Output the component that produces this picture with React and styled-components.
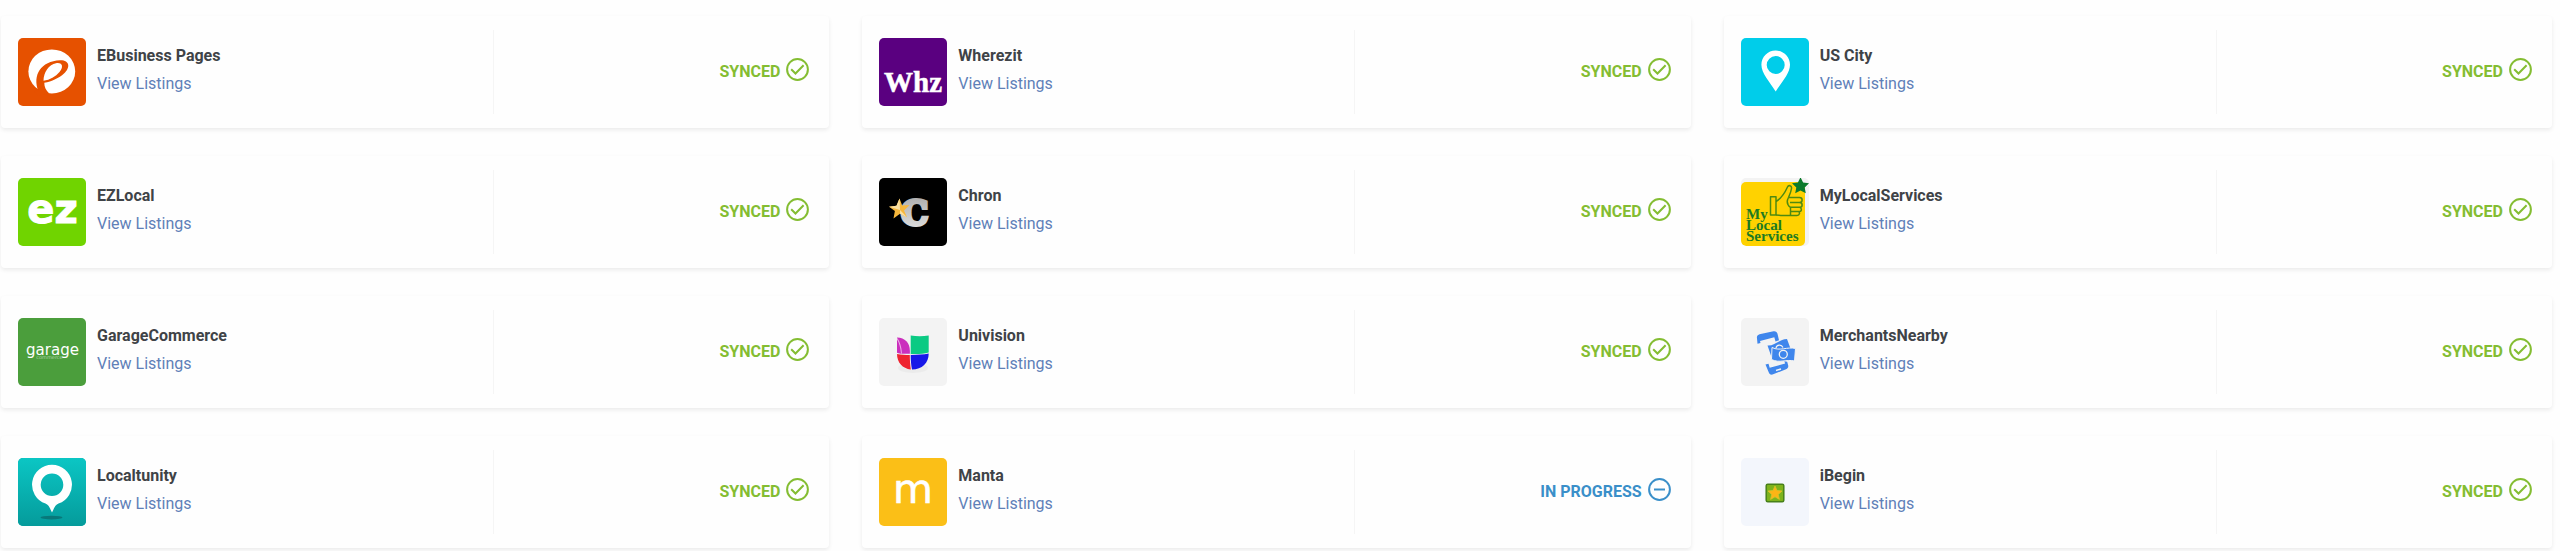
import React from 'react';
import styled, { createGlobalStyle } from 'styled-components';

const theme = {
	font: `Roboto, "Liberation Sans", sans-serif`,
	dark: "#3f4347",
	link: "#5f80b8",
	synced: "#84bd32",
	progress: "#3a8fc9",
}

const listings = [
	{ name: "EBusiness Pages", logo: EBusinessLogo, bg: "#e65100" },
	{ name: "Wherezit", logo: WherezitLogo, bg: "#5a0080" },
	{ name: "US City", logo: UsCityLogo, bg: "#00cdea" },
	{ name: "EZLocal", logo: EzLocalLogo, bg: "#70d400" },
	{ name: "Chron", logo: ChronLogo, bg: "#000000" },
	{ name: "MyLocalServices", logo: MyLocalLogo, bg: "#f3f3f3" },
	{ name: "GarageCommerce", logo: GarageLogo, bg: "#4b9e3c" },
	{ name: "Univision", logo: UnivisionLogo, bg: "#f3f3f3" },
	{ name: "MerchantsNearby", logo: MerchantsLogo, bg: "#f3f3f3" },
	{ name: "Localtunity", logo: LocaltunityLogo, bg: "#04b0ae" },
	{ name: "Manta", logo: MantaLogo, bg: "#fbbf17", inProgress: true },
	{ name: "iBegin", logo: IBeginLogo, bg: "#f3f6fc" },
]

export default function App () {
	return (
		<>
			<GlobalStyle />
			<Grid>
				{ listings.map( ( listing ) => <ListingCard key={ listing.name } { ...listing } /> ) }
			</Grid>
		</>
	)
}

function ListingCard ( { name, logo: Logo, bg, inProgress } ) {
	return (
		<Card>
			<Info>
				<LogoBox $bg={ bg }>
					<Logo />
				</LogoBox>
				<div>
					<Name>{ name }</Name>
					<ViewLink href="#listings">View Listings</ViewLink>
				</div>
			</Info>
			<Status $inProgress={ inProgress }>
				<span>{ inProgress ? "IN PROGRESS" : "SYNCED" }</span>
				<StatusIcon viewBox="0 0 23 23" aria-hidden="true">
					<circle cx="11.5" cy="11.5" r="10.4" />
					{ inProgress ? <path d="M6 11.5h11" /> : <path d="M5.2 11.3l4.3 4.2 8.1-8.2" /> }
				</StatusIcon>
			</Status>
		</Card>
	)
}

function EBusinessLogo () {
	return (
		<svg viewBox="0 0 68 68">
			<ellipse cx="33.8" cy="33.4" rx="23.4" ry="22" fill="#fff" />
			<path fill="#e65100" d="M20.5 53.5C14 37 23 23 42 22.2c10-.2 10.500 7.300 4 13.300C41 40 34 43.500 26.300 44.800c0 4.200 1.500 7.700 5 10.700L20 58l-5-6z" />
			<path fill="#fff" d="M25.500 42.800C25.500 34 31 26.500 38 25.200c7-1 7.500 4 3.500 8.800-4 4.700-9.500 7.800-16 8.800z" />
		</svg>
	)
}

function WherezitLogo () {
	return (
		<svg viewBox="0 0 68 68">
			<text x="34" y="54" textAnchor="middle" fill="#fff" stroke="#fff" strokeWidth=".5" fontFamily="Liberation Serif, serif" fontWeight="700" fontSize="29">Whz</text>
		</svg>
	)
}

function UsCityLogo () {
	return (
		<svg viewBox="0 0 68 68">
			<path fill="#fff" fillRule="evenodd" d="M34.700 12.500c-8 0-14.300 6.300-14.300 14.300 0 8.700 8.300 17.200 14.300 26.700C40.700 44 49 35.500 49 26.800c0-8-6.300-14.300-14.300-14.300zm0 5.500a9 9 0 1 1 0 18 9 9 0 0 1 0-18z" />
		</svg>
	)
}

function EzLocalLogo () {
	return (
		<svg viewBox="0 0 68 68">
			<text x="34.500" y="45" textAnchor="middle" fill="#fff" stroke="#fff" strokeWidth="1" fontFamily="DejaVu Sans, sans-serif" fontWeight="700" fontSize="40">ez</text>
		</svg>
	)
}

function ChronLogo () {
	return (
		<svg viewBox="0 0 68 68">
			<defs>
				<linearGradient id="steel" x1="0" y1="0" x2="0" y2="1">
					<stop offset="0" stopColor="#a8a8a8" />
					<stop offset="1" stopColor="#e4e4e4" />
				</linearGradient>
			</defs>
			<text x="22" y="47" fill="url(#steel)" stroke="url(#steel)" strokeWidth="4" fontFamily="DejaVu Serif, serif" fontWeight="700" fontSize="34">C</text>
			<path fill="#f6b73c" d="M20.500 20.500l2.700 7 7.300-.5-5.500 5.500 3 6.800-7-3.600-6.500 4.800 1.400-7.500-5.900-4.300 7.500-1z" />
			<path fill="#fbe0a0" d="M20.500 20.500l.5 11.500-11-3.300 7.500-1zM21 32l7 7.300-7-3.600z" />
		</svg>
	)
}

function MyLocalLogo () {
	return (
		<svg viewBox="0 0 68 68">
			<rect y="4" width="64" height="64" rx="5" fill="#ffd200" />
			<path fill="#0b7a2b" d="M59.500-.8l2.600 5.300 5.900.8-4.300 4.100 1.100 5.900-5.300-2.800-5.300 2.800 1.100-5.900L51 5.300l5.900-.8z" />
			<g fill="none" stroke="#4f8a10" strokeWidth="1.500" strokeLinejoin="round">
				<path d="M29.500 18.800h5.500v18.200h-5.500zM35 23.500c6-3.500 9-9 11.500-14.500 1-2.300 4.500-1.500 4 1.500-.4 3-1.800 6-3 9" />
				<path d="M47.500 19.500h11c3.500 0 3.500 5 0 5H49M58.500 24.500c3.500 0 3.500 4.800 0 4.800H49.500M58.500 29.300c2.500.3 2.500 4.200 0 4.200H50M57.500 33.500c1.500.5 1.500 4-1.500 4H41c-2 0-4-.5-6-.5M47.500 19.500c-2.500 4.500-.5 8 2 10v7.500" />
			</g>
			<g fill="#1d7a22" fontFamily="Liberation Serif, serif" fontWeight="700" fontSize="15">
				<text x="5" y="41">My</text>
				<text x="5" y="52">Local</text>
				<text x="5" y="63">Services</text>
			</g>
		</svg>
	)
}

function GarageLogo () {
	return (
		<svg viewBox="0 0 68 68">
			<g fill="#fff" textAnchor="middle" fontFamily="DejaVu Sans, sans-serif">
				<text x="34.500" y="37" fontSize="15">garage</text>
				<text x="31.500" y="41" fontSize="5" opacity=".5">commerce</text>
			</g>
		</svg>
	)
}

function UnivisionLogo () {
	return (
		<svg viewBox="0 0 68 68">
			<ellipse cx="34" cy="50" rx="15" ry="5" fill="#ebebeb" />
			<path fill="#cb2fbd" d="M18 19.600c8 .4 12.700 5 12.900 13.400v2.800H22c-2-.3-3.500-.6-4-1z" />
			<path fill="#fff" opacity=".6" d="M18 19.600c3 4 4.500 9 5 16h-1c-.5-6-2-11-4-14z" />
			<path fill="#0bca83" d="M31.700 17.600c6 1 12 1 18 0v17c-5 1.400-11 1.600-18 1.400z" />
			<path fill="#ee2430" d="M18 36c4 .8 8.500 1 12.800 1 0 5 .4 10 1 14.500C23.500 50.500 18 44.500 18 36z" />
			<path fill="#1717e8" d="M31.700 37c6.500 0 13-.4 18-1.400 0 9.500-6.500 16-16.700 16-.9-4.600-1.300-9.600-1.300-14.600z" />
		</svg>
	)
}

function MerchantsLogo () {
	return (
		<svg viewBox="0 0 68 68">
			<path fill="#3f86ec" d="M16 20.500c-.5-2 .5-3.500 2.500-4.200l14-3c2-.4 3.500.6 4 2.500l1.500 6.500-3.500 1.200-1.200-4.200L19 23l.5 2-3 .8z" />
			<path fill="#3f86ec" d="M24.500 46.500l3-.7 1.200 4 15.500-4.300-1-2.500 3 .7 1 3.800c.4 1.800-.5 3.200-2.200 3.800l-13.500 5.200c-1.800.5-3.200-.3-3.800-2.200z" />
			<path stroke="#f3f3f3" strokeWidth="1.500" d="M35 52.500l5-1.500" />
			<path fill="#3f86ec" d="M26.500 27.500c7 .5 11-6 19.500-6.500l3.500 9.500-19 8.500z" />
			<path fill="#3f86ec" stroke="#f3f3f3" strokeWidth="1" d="M31 29.500c8 4 15-1 23.500 1l-1 12.500c-8-2-15 2.500-23-1.500z" />
			<circle cx="42.300" cy="36.300" r="4" fill="none" stroke="#f3f3f3" strokeWidth="1.300" />
			<path fill="none" stroke="#f3f3f3" strokeWidth="1.200" d="M35 30c.5-3.500 5.500-4 7-.5" />
		</svg>
	)
}

function LocaltunityLogo () {
	return (
		<svg viewBox="0 0 68 68">
			<defs>
				<linearGradient id="teal" x1="0" y1="0" x2="0" y2="1">
					<stop offset="0" stopColor="#0bc6c4" />
					<stop offset="1" stopColor="#059b9b" />
				</linearGradient>
			</defs>
			<rect width="68" height="68" fill="url(#teal)" />
			<ellipse cx="33.500" cy="59.600" rx="11" ry="1.800" fill="#08787a" />
			<path fill="#fff" fillRule="evenodd" d="M34 6.700a20 20 0 0 0-6.500 38.900c3 1.200 4.500 4.400 6.500 9 2-4.600 3.500-7.800 6.500-9A20 20 0 0 0 34 6.700zm0 8.700a11.300 11.300 0 1 1 0 22.600 11.300 11.300 0 0 1 0-22.600z" />
		</svg>
	)
}

function MantaLogo () {
	return (
		<svg viewBox="0 0 68 68">
			<text x="34" y="44.500" textAnchor="middle" fill="#fff" stroke="#fff" strokeWidth=".6" fontFamily="DejaVu Sans, sans-serif" fontSize="41">m</text>
		</svg>
	)
}

function IBeginLogo () {
	return (
		<svg viewBox="0 0 68 68">
			<rect x="25.200" y="26.200" width="17.600" height="17.600" rx="1.500" fill="#7db31c" stroke="#47801a" strokeWidth="1.500" />
			<path fill="#fdb515" stroke="#d7c32c" strokeWidth=".8" d="M34 28l2 4.500 5 .5-3.700 3.400 1.100 5-4.400-2.600-4.400 2.600 1.100-5L27 33l5-.5z" />
		</svg>
	)
}

const GlobalStyle = createGlobalStyle`
	* {
		box-sizing: border-box;
	}

	body {
		margin: 0;
		background: #fefefe;
		font-family: ${ theme.font };
		font-size: 16px;
	}
`

const Grid = styled.main`
	display: grid;
	grid-template-columns: repeat(3, 1fr);
	gap: 28px 33px;
	padding: 16px 8px 3px 1px;

	@media (max-width: 1280px){
		grid-template-columns: 1fr;
	}
`

const Card = styled.article`
	display: flex;
	align-items: center;
	justify-content: space-between;
	min-height: 112px;
	padding-right: 20px;
	border-radius: 4px;
	background: #fefefe;
	box-shadow: 0 2px 4px 0 #00000014;
`

const Info = styled.div`
	display: flex;
	align-items: center;
	gap: 11px;
	width: 61%;
	height: 84px;
	padding-left: 17px;
	border-right: 1px solid #f5f5f5;
`

const LogoBox = styled.div`
	flex: none;
	width: 68px;
	height: 68px;
	border-radius: 5px;
	background: ${ props => props.$bg };
	overflow: hidden;

	svg {
		display: block;
		width: 100%;
		height: 100%;
	}
`

const Name = styled.h4`
	margin: 0;
	padding-bottom: 4px;
	color: ${ theme.dark };
	font-size: 16px;
	font-weight: 700;
	line-height: 24px;
`

const ViewLink = styled.a`
	display: block;
	padding-bottom: 4px;
	color: ${ theme.link };
	line-height: 24px;
	text-decoration: none;
`

const Status = styled.div`
	display: flex;
	align-items: center;
	gap: 6px;
	color: ${ props => props.$inProgress ? theme.progress : theme.synced };
	font-weight: 700;
	line-height: 24px;
`

const StatusIcon = styled.svg`
	width: 23px;
	height: 23px;
	margin-bottom: 6px;
	fill: none;
	stroke: currentColor;
	stroke-width: 2;
`
